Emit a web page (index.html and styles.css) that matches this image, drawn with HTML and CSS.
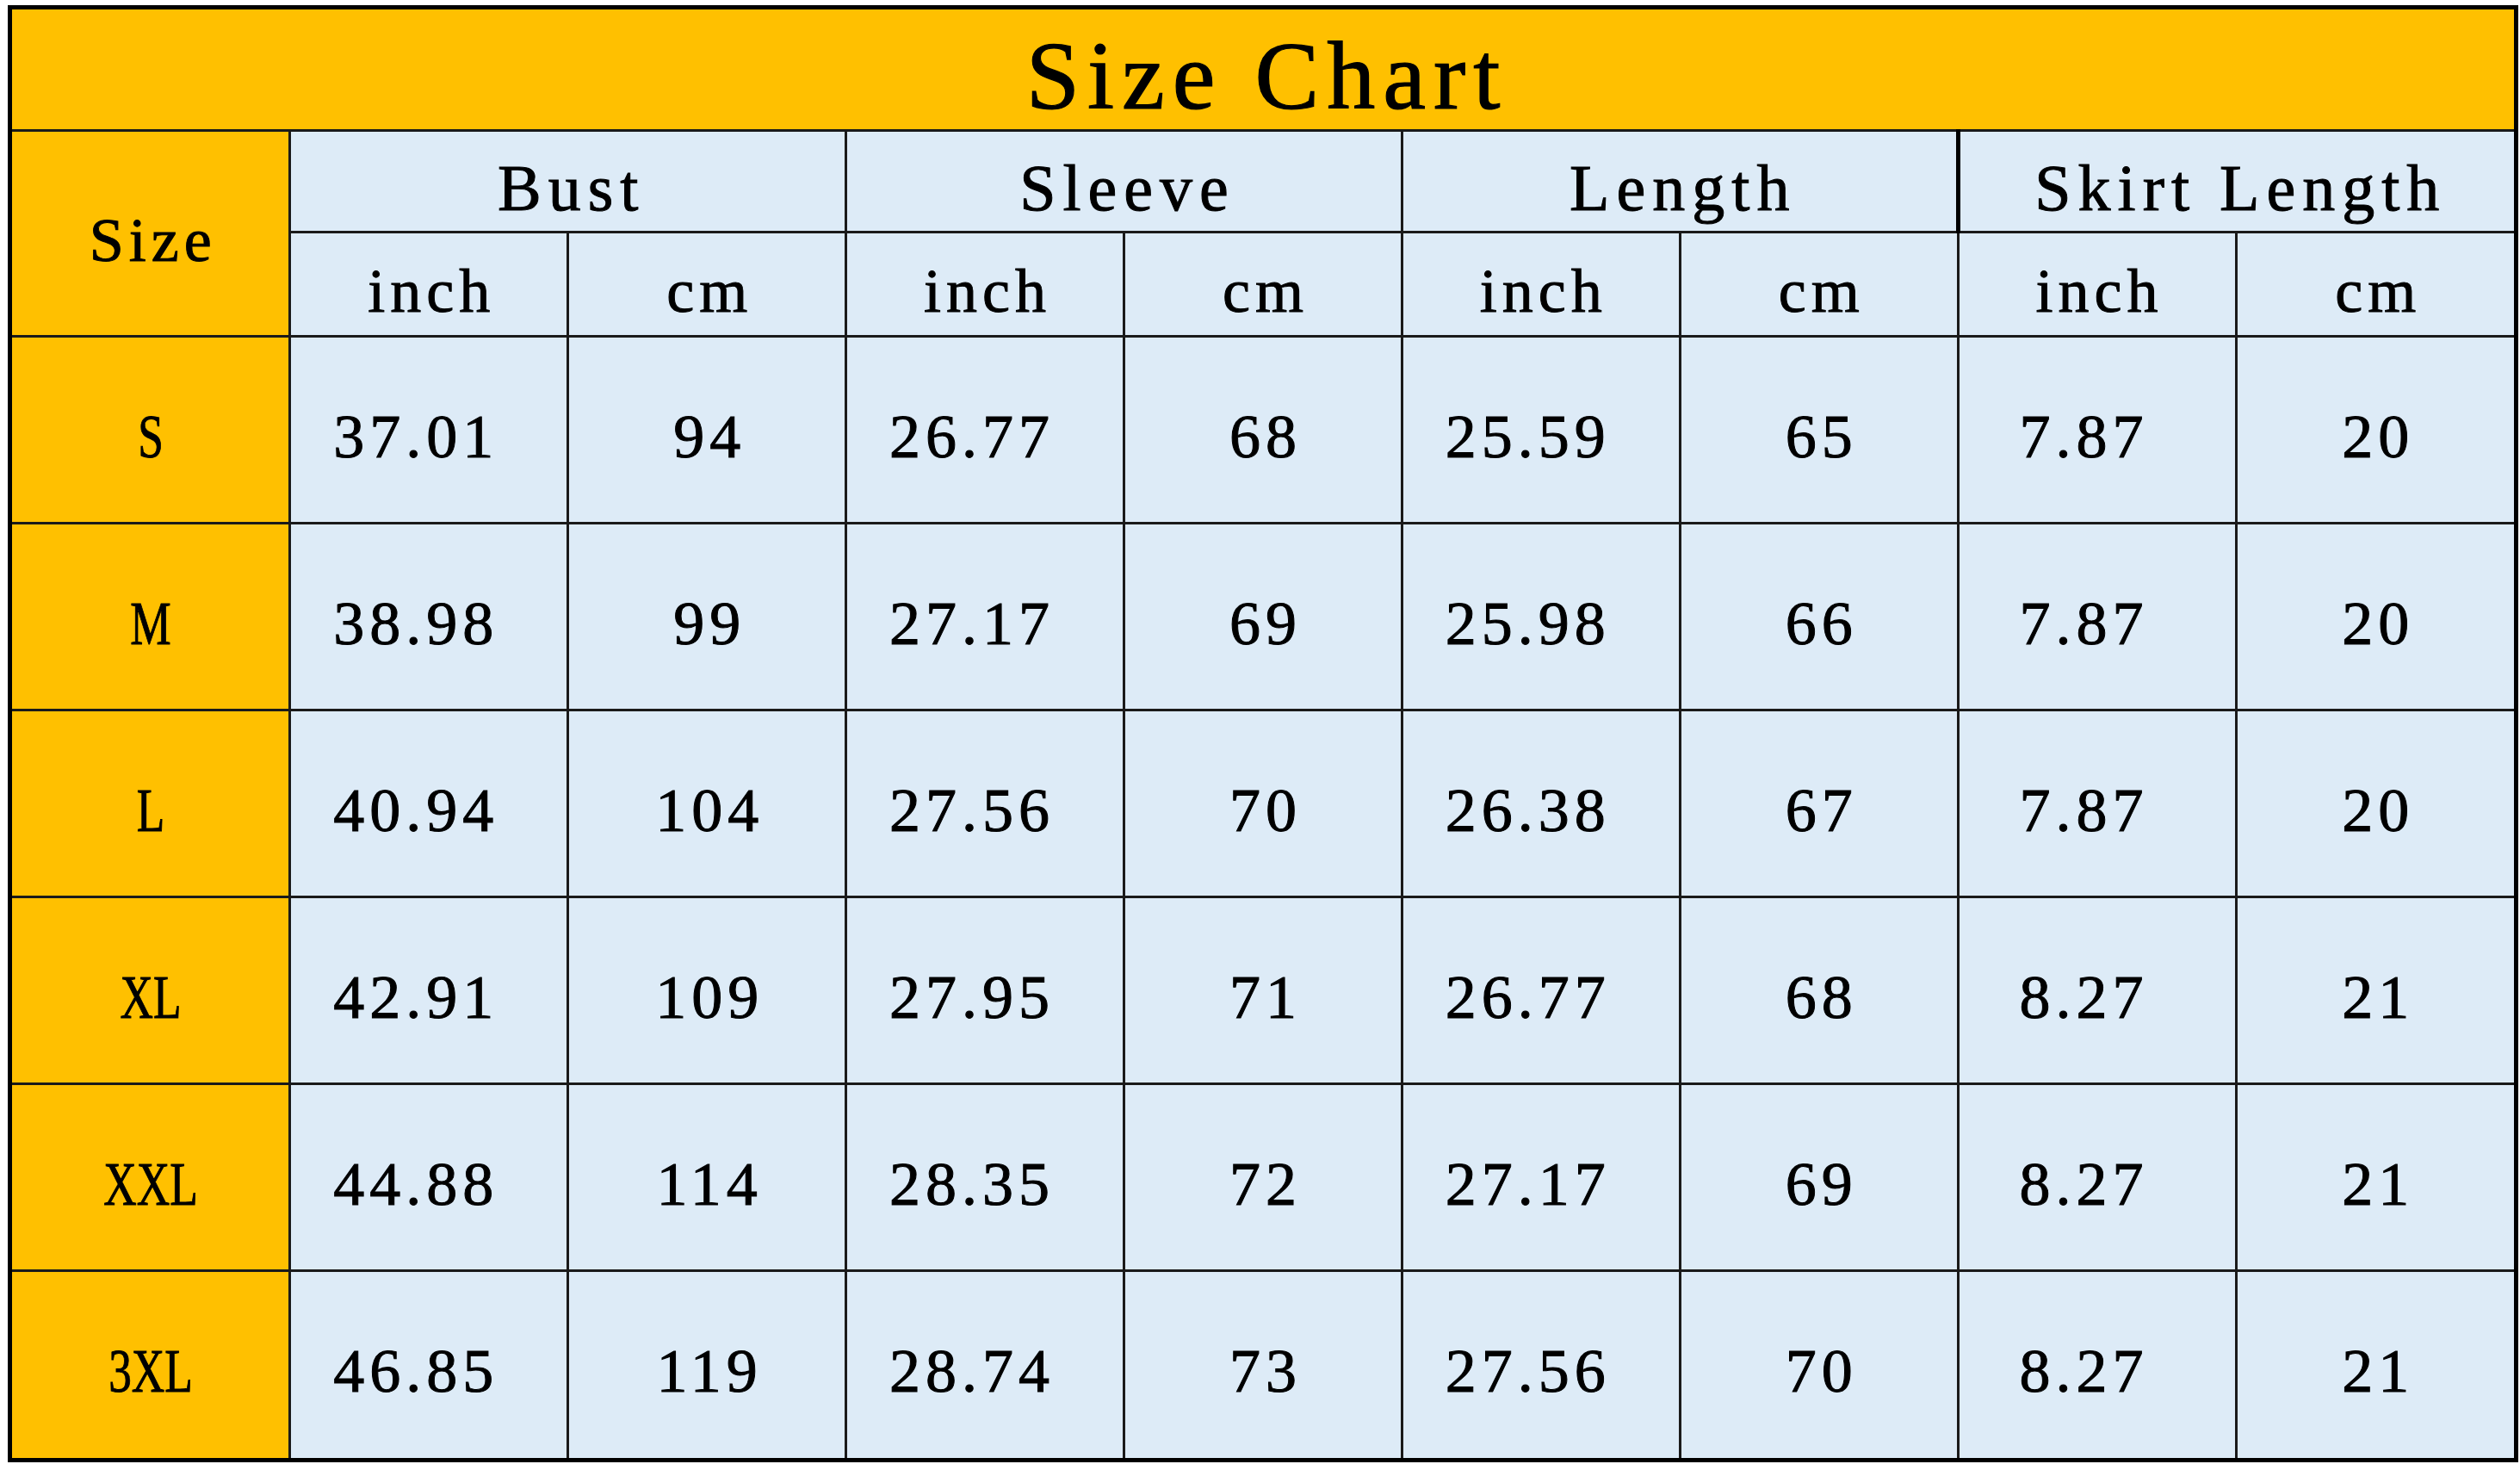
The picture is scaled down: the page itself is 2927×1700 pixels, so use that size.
FILE: index.html
```html
<!DOCTYPE html>
<html lang="en">
<head>
<meta charset="utf-8">
<title>Size Chart</title>
<link rel="stylesheet" href="styles.css">
</head>
<body>
<div class="chart">
  <table class="size-table">
    <colgroup>
      <col><col><col><col><col><col><col><col><col>
    </colgroup>
    <thead>
      <tr class="title-row">
        <th class="title" colspan="9">Size Chart</th>
      </tr>
      <tr class="group-row">
        <th class="size-head" rowspan="2">Size</th>
        <th class="group" colspan="2">Bust</th>
        <th class="group" colspan="2">Sleeve</th>
        <th class="group" colspan="2">Length</th>
        <th class="group group-skirt" colspan="2">Skirt Length</th>
      </tr>
      <tr class="unit-row">
        <th class="unit">inch</th><th class="unit">cm</th>
        <th class="unit">inch</th><th class="unit">cm</th>
        <th class="unit">inch</th><th class="unit">cm</th>
        <th class="unit">inch</th><th class="unit">cm</th>
      </tr>
    </thead>
    <tbody>
      <tr><th class="size"><span>S</span></th><td>37.01</td><td>94</td><td>26.77</td><td>68</td><td>25.59</td><td>65</td><td>7.87</td><td>20</td></tr>
      <tr><th class="size"><span>M</span></th><td>38.98</td><td>99</td><td>27.17</td><td>69</td><td>25.98</td><td>66</td><td>7.87</td><td>20</td></tr>
      <tr><th class="size"><span>L</span></th><td>40.94</td><td>104</td><td>27.56</td><td>70</td><td>26.38</td><td>67</td><td>7.87</td><td>20</td></tr>
      <tr><th class="size"><span>XL</span></th><td>42.91</td><td>109</td><td>27.95</td><td>71</td><td>26.77</td><td>68</td><td>8.27</td><td>21</td></tr>
      <tr><th class="size"><span>XXL</span></th><td>44.88</td><td>114</td><td>28.35</td><td>72</td><td>27.17</td><td>69</td><td>8.27</td><td>21</td></tr>
      <tr><th class="size"><span>3XL</span></th><td>46.85</td><td>119</td><td>28.74</td><td>73</td><td>27.56</td><td>70</td><td>8.27</td><td>21</td></tr>
    </tbody>
  </table>
</div>
</body>
</html>
```

FILE: styles.css
```css
html, body {
  margin: 0;
  padding: 0;
  background: #ffffff;
}

body {
  padding: 6px 0 0 9px;
  font-family: "Liberation Serif", "Times New Roman", serif;
  color: #000;
}

.chart {
  width: 2906px;
  border: 5px solid #000;
}

.size-table {
  width: 100%;
  table-layout: fixed;
  border-collapse: collapse;
  border-style: hidden;
}

.size-table th,
.size-table td {
  border: 3px solid #1a1a1a;
  padding: 16px 0 0 0;
  text-align: center;
  vertical-align: middle;
  font-weight: 400;
  background: #ddebf7;
  font-size: 72px;
  letter-spacing: 6px;
  text-indent: 6px;
  line-height: 1.1;
  -webkit-text-stroke: 1px #000;
}

.title-row { height: 138px; }
.group-row { height: 118px; }
.unit-row { height: 121px; }
.size-table tbody tr { height: 217px; }

.size-table .title {
  background: #ffc000;
  font-size: 112px;
  letter-spacing: 9px;
  text-indent: 9px;
  -webkit-text-stroke: 1.2px #000;
}

.size-table .size-head,
.size-table .size {
  background: #ffc000;
}

.size-table .size {
  letter-spacing: 0;
  text-indent: 0;
}

.size-table .size span {
  display: inline-block;
  transform: scaleX(0.74);
}

.size-table .group {
  font-size: 76px;
  letter-spacing: 8px;
  text-indent: 8px;
}

.size-table .group-skirt {
  border-left: 5px solid #000;
}

.size-table tbody td:nth-child(even) {
  padding-right: 36px;
}
```
